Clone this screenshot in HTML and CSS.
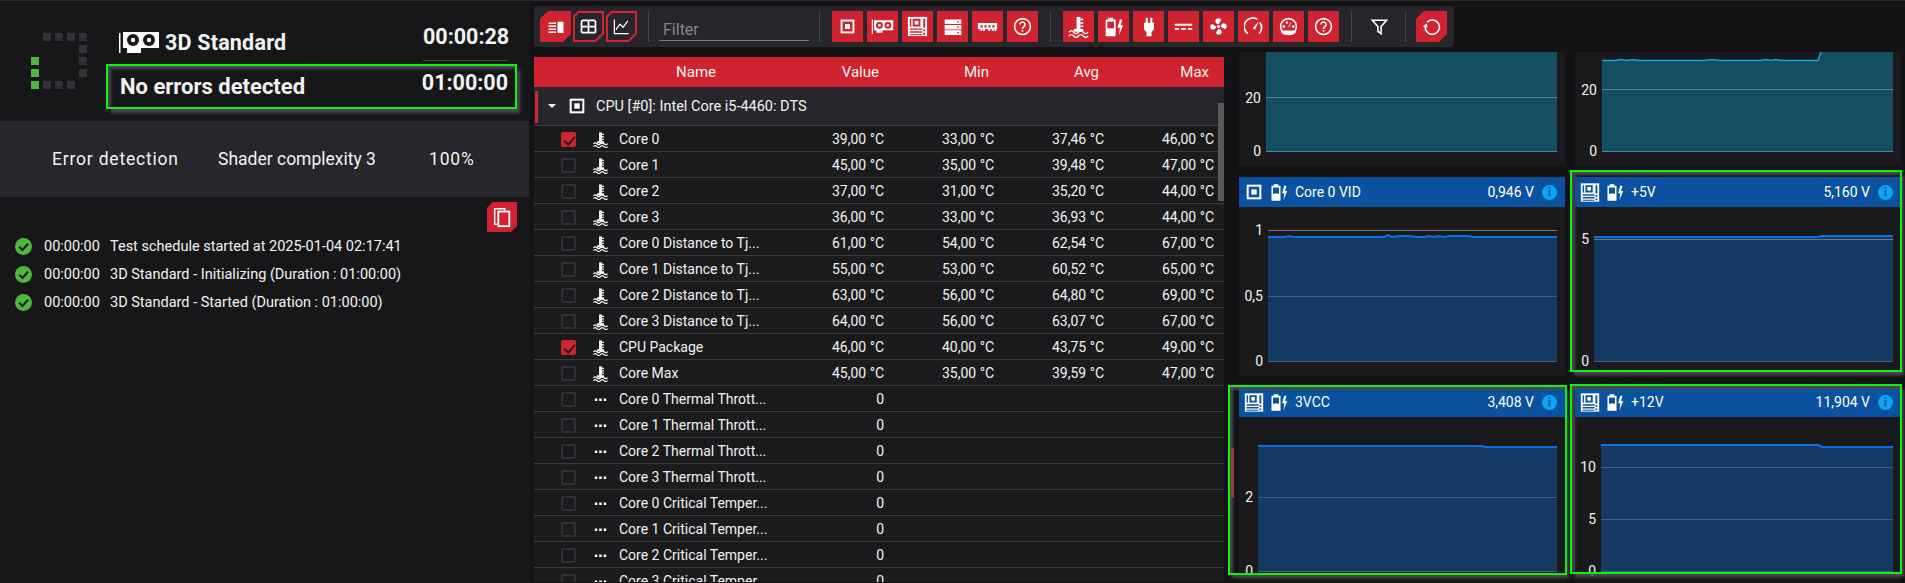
FILE: index.html
```html
<!DOCTYPE html>
<html lang="en">
<head>
<meta charset="utf-8">
<title>3D Standard</title>
<link rel="stylesheet" href="styles.css">
</head>
<body>
<svg class="sprite" xmlns="http://www.w3.org/2000/svg">
  <symbol id="i-panel" viewBox="0 0 24 24"><path d="M2 6h10v2H2zM2 10h10v2H2zM2 14h10v2H2zM2 18h10v2H2zM14 5h8v15h-8z" fill="#fff"/></symbol>
  <symbol id="i-table" viewBox="0 0 24 24"><rect x="4" y="5" width="16" height="14" rx="2" fill="none" stroke="#fff" stroke-width="2"/><path d="M4 12h16M12 5v14" stroke="#fff" stroke-width="2"/></symbol>
  <symbol id="i-chart" viewBox="0 0 24 24"><path d="M3 3v18h18" fill="none" stroke="#fff" stroke-width="1.6"/><path d="M5 16l5-7 4 4 6-8" fill="none" stroke="#fff" stroke-width="1.6"/></symbol>
  <symbol id="i-cpu" viewBox="0 0 24 24"><rect x="2.5" y="2.5" width="19" height="19" fill="none" stroke="#fff" stroke-width="3"/><rect x="8" y="8" width="8" height="8" fill="#fff"/></symbol>
  <symbol id="i-gpu" viewBox="0 0 30 24"><path d="M1 3h1.500v19H1zM4 4h25v13H15v3H7v-3H4z" fill="#fff"/><circle cx="11" cy="10.500" r="4.500" fill="#cf2430"/><circle cx="22" cy="10.500" r="4.500" fill="#cf2430"/><circle cx="11" cy="10.500" r="1.800" fill="#fff"/><circle cx="22" cy="10.500" r="1.800" fill="#fff"/></symbol>
  <symbol id="i-gpu-w" viewBox="0 0 40 22"><path d="M0 1h1.500v20H0zM4 0h36v16H22v5H8v-5H4z" fill="#fff"/><circle cx="14" cy="8" r="6" fill="#17171a"/><circle cx="30" cy="8" r="6" fill="#17171a"/><circle cx="14" cy="8" r="2.200" fill="#fff"/><circle cx="30" cy="8" r="2.200" fill="#fff"/></symbol>
  <symbol id="i-mobo" viewBox="0 0 24 24"><path d="M2 2h20v20H2z" fill="#fff"/><path d="M7 4h8v8H7zM4 14h13v1.500H4zM4 17h13v1.500H4zM4 20h13v1H4zM18 4h2v9h-2zM18 15h2v2h-2zM18 18.500h2v2h-2zM4 4h1.500v8H4z" fill="currentColor"/><path d="M9 6h4v4H9z" fill="#fff"/></symbol>
  <symbol id="i-store" viewBox="0 0 24 24"><path d="M2 3h20v5.500H2zM2 9.500h20V15H2zM2 16h20v5.500H2z" fill="#fff"/><path d="M17 5h2v1.500h-2zM17 11.500h2V13h-2zM17 18h2v1.500h-2z" fill="#cf2430"/></symbol>
  <symbol id="i-ram" viewBox="0 0 24 24"><path d="M1 8h22v7h-1v2h-2v-2h-1v2h-2v-2h-2v2h-2v-2H9v2H7v-2H6v2H4v-2H1z" fill="#fff"/><path d="M4 10.500h2.500V13H4zM8.500 10.500H11V13H8.500zM13 10.500h2.500V13H13zM17.500 10.500H20V13h-2.500z" fill="#cf2430"/></symbol>
  <symbol id="i-help" viewBox="0 0 24 24"><circle cx="12" cy="12" r="10" fill="none" stroke="#fff" stroke-width="2"/><path d="M8.800 9.500a3.200 3.200 0 1 1 5 2.700c-1.200.8-1.800 1.400-1.800 2.800" fill="none" stroke="#fff" stroke-width="2"/><path d="M11 16.500h2v2h-2z" fill="#fff"/></symbol>
  <symbol id="i-temp" viewBox="0 0 24 24"><path d="M10 2h4v13h-4z" fill="#fff"/><path d="M14 4h3v1.500h-3zM14 7.500h3V9h-3zM14 11h3v1.500h-3z" fill="#fff"/><path d="M7 16h10" stroke="#fff" stroke-width="3"/><path d="M2 18c2-2 3-2 5 0s3 2 5 0 3-2 5 0 3 2 5 0M2 22c2-2 3-2 5 0s3 2 5 0 3-2 5 0 3 2 5 0" fill="none" stroke="#fff" stroke-width="1.500"/></symbol>
  <symbol id="i-volt" viewBox="0 0 24 24"><path d="M5 1h6v2h3v20H2V3h3z" fill="#fff"/><path d="M4 5.500h8v8H4z" fill="currentColor"/><path d="M19 3l-3 10h3l-1 9 5-12h-3l2-7z" fill="#fff"/></symbol>
  <symbol id="i-plug" viewBox="0 0 24 24"><path d="M8 1h2.500v6h3V1H16v6h2v8l-3 3v5H9v-5l-3-3V7h2z" fill="#fff"/></symbol>
  <symbol id="i-dc" viewBox="0 0 24 24"><path d="M1 8.500h22v2.500H1zM1 14h5.500v2H1zM9 14h6v2H9zM17.500 14H23v2h-5.500z" fill="#fff"/></symbol>
  <symbol id="i-fan" viewBox="0 0 24 24"><circle cx="12" cy="12" r="2" fill="#fff"/><path d="M11 9C8 8 7 5 9 2.500c2-1.500 6-1 6 1.500 0 2-2 3-3 5zM15 11c1-3 4-4 6.500-2 1.500 2 1 6-1.500 6-2 0-3-2-5-3zM13 15c3 1 4 4 2 6.500-2 1.500-6 1-6-1.500 0-2 2-3 3-5zM9 13c-1 3-4 4-6.500 2C1 13 1.500 9 4 9c2 0 3 2 5 3z" fill="#fff"/></symbol>
  <symbol id="i-gauge" viewBox="0 0 24 24"><path d="M5 21A10.500 10.500 0 0 1 17 3M20 7a10.500 10.500 0 0 1-1 14" fill="none" stroke="#fff" stroke-width="2.200"/><path d="M19 5l-5 11-3-2z" fill="#fff"/></symbol>
  <symbol id="i-dial" viewBox="0 0 24 24"><circle cx="12" cy="12" r="10" fill="none" stroke="#fff" stroke-width="2"/><path d="M3 17h18v3l-3 2H6l-3-2z" fill="#fff"/><path d="M5 11h2v2H5zM9 6h2v2H9zM17 11h2v2h-2zM15 7l-3 6" stroke="#fff" fill="#fff"/></symbol>
  <symbol id="i-funnel" viewBox="0 0 24 24"><path d="M3 4h18l-7 8v9l-4-3v-6z" fill="none" stroke="#fff" stroke-width="2"/></symbol>
  <symbol id="i-reset" viewBox="0 0 24 24"><path d="M6.500 6.500A9 9 0 1 1 4 13" fill="none" stroke="#fff" stroke-width="2"/><path d="M1 12l5-4 1 6z" fill="#fff"/></symbol>
  <symbol id="i-copy" viewBox="0 0 24 24"><path d="M7 20H4V3h11v2" fill="none" stroke="#fff" stroke-width="1.600"/><rect x="8" y="6" width="12" height="16" fill="none" stroke="#fff" stroke-width="2"/></symbol>
  <symbol id="i-ok" viewBox="0 0 24 24"><circle cx="12" cy="12" r="12" fill="#4cb83c"/><path d="M6 12.500l4.500 4.500L18.500 8" fill="none" stroke="#17171a" stroke-width="3"/></symbol>
  <symbol id="i-dots" viewBox="0 0 24 24"><path d="M4 10.500h3.500V14H4zM10.200 10.500h3.500V14h-3.500zM16.500 10.500H20V14h-3.500z" fill="#fff"/></symbol>
</svg>

<div class="app">
  <aside class="side">
    <section class="status">
      <div class="spinner">
        <i></i><i class="off"></i><i class="off"></i><i class="off"></i><i class="off"></i>
        <i></i><i></i><i></i><i></i><i class="off"></i>
        <i class="on"></i><i></i><i></i><i></i><i class="off"></i>
        <i class="on"></i><i></i><i></i><i></i><i class="off"></i>
        <i class="on"></i><i class="off"></i><i class="off"></i><i class="off"></i><i></i>
      </div>
      <div class="head">
        <div class="title-row">
          <svg class="title-icon"><use href="#i-gpu-w"/></svg>
          <span class="title">3D Standard</span>
          <span class="timer timer-run">00:00:28</span>
        </div>
        <div class="result">
          <span class="result-text">No errors detected</span>
          <span class="timer">01:00:00</span>
        </div>
      </div>
    </section>
    <section class="band">
      <span class="band-wide">Error detection</span>
      <span>Shader complexity 3</span>
      <span class="band-wide">100%</span>
    </section>
    <div class="copy-row"><button class="copy"><svg class="ic-copy"><use href="#i-copy"/></svg></button></div>
    <ul class="log">
      <li><svg class="ok"><use href="#i-ok"/></svg><span>00:00:00</span><span>Test schedule started at 2025-01-04 02:17:41</span></li>
      <li><svg class="ok"><use href="#i-ok"/></svg><span>00:00:00</span><span>3D Standard - Initializing (Duration : 01:00:00)</span></li>
      <li><svg class="ok"><use href="#i-ok"/></svg><span>00:00:00</span><span>3D Standard - Started (Duration : 01:00:00)</span></li>
    </ul>
  </aside>

  <main class="main">
    <nav class="toolbar">
      <div class="tools tight">
        <button class="btn cut"><svg class="ic s18"><use href="#i-panel"/></svg></button>
        <button class="btn ghost"><svg class="ic s21"><use href="#i-table"/></svg></button>
        <button class="btn ghost"><svg class="ic s19"><use href="#i-chart"/></svg></button>
      </div>
      <span class="sep sep-a"></span>
      <label class="filter">Filter</label>
      <span class="sep sep-b"></span>
      <div class="tools">
        <button class="btn"><svg class="ic s15"><use href="#i-cpu"/></svg></button>
        <button class="btn"><svg class="ic s23"><use href="#i-gpu"/></svg></button>
        <button class="btn"><svg class="ic s23"><use href="#i-mobo"/></svg></button>
        <button class="btn"><svg class="ic s20"><use href="#i-store"/></svg></button>
        <button class="btn"><svg class="ic s21"><use href="#i-ram"/></svg></button>
        <button class="btn"><svg class="ic s19"><use href="#i-help"/></svg></button>
      </div>
      <span class="sep sep-c"></span>
      <div class="tools">
        <button class="btn"><svg class="ic s23"><use href="#i-temp"/></svg></button>
        <button class="btn"><svg class="ic s20"><use href="#i-volt"/></svg></button>
        <button class="btn"><svg class="ic s20"><use href="#i-plug"/></svg></button>
        <button class="btn"><svg class="ic s19"><use href="#i-dc"/></svg></button>
        <button class="btn"><svg class="ic s19"><use href="#i-fan"/></svg></button>
        <button class="btn"><svg class="ic s19"><use href="#i-gauge"/></svg></button>
        <button class="btn"><svg class="ic s19"><use href="#i-dial"/></svg></button>
        <button class="btn"><svg class="ic s19"><use href="#i-help"/></svg></button>
      </div>
      <span class="sep sep-d"></span>
      <svg class="ic funnel"><use href="#i-funnel"/></svg>
      <span class="sep sep-e"></span>
      <button class="btn cut"><svg class="ic s19"><use href="#i-reset"/></svg></button>
    </nav>

    <div class="content">
      <section class="table">
        <div class="thead">
          <span class="c-name">Name</span><span class="num">Value</span><span class="num">Min</span><span class="num">Avg</span><span class="num">Max</span>
        </div>
        <div class="group">
          <span class="caret"></span>
          <svg class="gicon"><use href="#i-cpu"/></svg>
          <span>CPU [#0]: Intel Core i5-4460: DTS</span>
        </div>
        <div class="rows">
          <div class="row"><i class="box on"></i><svg class="ric"><use href="#i-temp"/></svg><span>Core 0</span><span>39,00 °C</span><span>33,00 °C</span><span>37,46 °C</span><span>46,00 °C</span></div>
          <div class="row"><i class="box"></i><svg class="ric"><use href="#i-temp"/></svg><span>Core 1</span><span>45,00 °C</span><span>35,00 °C</span><span>39,48 °C</span><span>47,00 °C</span></div>
          <div class="row"><i class="box"></i><svg class="ric"><use href="#i-temp"/></svg><span>Core 2</span><span>37,00 °C</span><span>31,00 °C</span><span>35,20 °C</span><span>44,00 °C</span></div>
          <div class="row"><i class="box"></i><svg class="ric"><use href="#i-temp"/></svg><span>Core 3</span><span>36,00 °C</span><span>33,00 °C</span><span>36,93 °C</span><span>44,00 °C</span></div>
          <div class="row"><i class="box"></i><svg class="ric"><use href="#i-temp"/></svg><span>Core 0 Distance to Tj...</span><span>61,00 °C</span><span>54,00 °C</span><span>62,54 °C</span><span>67,00 °C</span></div>
          <div class="row"><i class="box"></i><svg class="ric"><use href="#i-temp"/></svg><span>Core 1 Distance to Tj...</span><span>55,00 °C</span><span>53,00 °C</span><span>60,52 °C</span><span>65,00 °C</span></div>
          <div class="row"><i class="box"></i><svg class="ric"><use href="#i-temp"/></svg><span>Core 2 Distance to Tj...</span><span>63,00 °C</span><span>56,00 °C</span><span>64,80 °C</span><span>69,00 °C</span></div>
          <div class="row"><i class="box"></i><svg class="ric"><use href="#i-temp"/></svg><span>Core 3 Distance to Tj...</span><span>64,00 °C</span><span>56,00 °C</span><span>63,07 °C</span><span>67,00 °C</span></div>
          <div class="row"><i class="box on"></i><svg class="ric"><use href="#i-temp"/></svg><span>CPU Package</span><span>46,00 °C</span><span>40,00 °C</span><span>43,75 °C</span><span>49,00 °C</span></div>
          <div class="row"><i class="box"></i><svg class="ric"><use href="#i-temp"/></svg><span>Core Max</span><span>45,00 °C</span><span>35,00 °C</span><span>39,59 °C</span><span>47,00 °C</span></div>
          <div class="row"><i class="box"></i><svg class="ric"><use href="#i-dots"/></svg><span>Core 0 Thermal Thrott...</span><span>0</span></div>
          <div class="row"><i class="box"></i><svg class="ric"><use href="#i-dots"/></svg><span>Core 1 Thermal Thrott...</span><span>0</span></div>
          <div class="row"><i class="box"></i><svg class="ric"><use href="#i-dots"/></svg><span>Core 2 Thermal Thrott...</span><span>0</span></div>
          <div class="row"><i class="box"></i><svg class="ric"><use href="#i-dots"/></svg><span>Core 3 Thermal Thrott...</span><span>0</span></div>
          <div class="row"><i class="box"></i><svg class="ric"><use href="#i-dots"/></svg><span>Core 0 Critical Temper...</span><span>0</span></div>
          <div class="row"><i class="box"></i><svg class="ric"><use href="#i-dots"/></svg><span>Core 1 Critical Temper...</span><span>0</span></div>
          <div class="row"><i class="box"></i><svg class="ric"><use href="#i-dots"/></svg><span>Core 2 Critical Temper...</span><span>0</span></div>
          <div class="row"><i class="box"></i><svg class="ric"><use href="#i-dots"/></svg><span>Core 3 Critical Temper...</span><span>0</span></div>
        </div>
        <div class="scrollbar"></div>
      </section>

      <section class="charts">
        <article class="card">
          <svg class="plot" viewBox="0 0 326 114">
            <rect class="teal" x="27" y="0" width="291" height="100"/>
            <path class="grid-t" d="M27 45.500H318M27 99.500H318"/>
            <text class="tick" x="22" y="51">20</text>
            <text class="tick" x="22" y="104">0</text>
          </svg>
        </article>
        <article class="card">
          <svg class="plot" viewBox="0 0 326 114">
            <path class="teal" d="M27 8.500H40L46 7.500 52 8.500 58 7.500 64 8.500H130L137 7.500 144 8.500H186L191 7.500 196 8.500 201 7.500 206 8.500H243L246 0H318V100H27Z"/>
            <path class="grid-t" d="M27 37.500H318M27 99.500H318"/>
            <path class="line-t" d="M27 8.500H40L46 7.500 52 8.500 58 7.500 64 8.500H130L137 7.500 144 8.500H186L191 7.500 196 8.500 201 7.500 206 8.500H243L246 0"/>
            <text class="tick" x="22" y="43">20</text>
            <text class="tick" x="22" y="104">0</text>
          </svg>
        </article>
        <article class="card">
          <header class="chead">
            <span class="slot"><svg class="h-cpu"><use href="#i-cpu"/></svg></span>
            <svg class="h-volt"><use href="#i-volt"/></svg>
            <span class="cname">Core 0 VID</span><span class="cval">0,946 V</span><span class="info">i</span>
          </header>
          <svg class="plot" viewBox="0 0 326 169">
            <path class="blue" d="M29 30H46L50 29 55 30H145L149 28 153 30 160 29H170L178 30H186L190 29 195 30 200 29 204 30 210 29H228L234 30H318V155H29Z"/>
            <path class="grid-top" d="M29 23.500H318"/>
            <path class="grid-b" d="M29 89.500H318M29 154.500H318"/>
            <path class="line-b" d="M29 30H46L50 29 55 30H145L149 28 153 30 160 29H170L178 30H186L190 29 195 30 200 29 204 30 210 29H228L234 30H318"/>
            <text class="tick" x="24" y="28">1</text>
            <text class="tick" x="24" y="94">0,5</text>
            <text class="tick" x="24" y="159">0</text>
          </svg>
        </article>
        <article class="card hl hl-5v">
          <header class="chead">
            <span class="slot"><svg class="h-mobo"><use href="#i-mobo"/></svg></span>
            <svg class="h-volt"><use href="#i-volt"/></svg>
            <span class="cname">+5V</span><span class="cval">5,160 V</span><span class="info">i</span>
          </header>
          <svg class="plot" viewBox="0 0 326 169">
            <path class="blue" d="M19 30H243L246 29H318V155H19Z"/>
            <path class="grid-top" d="M19 32.500H318"/>
            <path class="grid-b" d="M19 154.500H318"/>
            <path class="line-b" d="M19 30H243L246 29H318"/>
            <text class="tick" x="14" y="37">5</text>
            <text class="tick" x="14" y="159">0</text>
          </svg>
        </article>
        <article class="card hl hl-3v">
          <span class="mark"></span>
          <header class="chead">
            <span class="slot"><svg class="h-mobo"><use href="#i-mobo"/></svg></span>
            <svg class="h-volt"><use href="#i-volt"/></svg>
            <span class="cname">3VCC</span><span class="cval">3,408 V</span><span class="info">i</span>
          </header>
          <svg class="plot" viewBox="0 0 326 166">
            <path class="blue" d="M19 29H243L246 30H318V155H19Z"/>
            <path class="grid-b" d="M19 80.500H318M19 154.500H318"/>
            <path class="line-b" d="M19 29H243L246 30H318"/>
            <text class="tick" x="14" y="85">2</text>
            <text class="tick" x="14" y="159">0</text>
          </svg>
        </article>
        <article class="card hl hl-12v">
          <header class="chead">
            <span class="slot"><svg class="h-mobo"><use href="#i-mobo"/></svg></span>
            <svg class="h-volt"><use href="#i-volt"/></svg>
            <span class="cname">+12V</span><span class="cval">11,904 V</span><span class="info">i</span>
          </header>
          <svg class="plot" viewBox="0 0 326 166">
            <path class="blue" d="M26 28H243L247 30H318V155H26Z"/>
            <path class="grid-b" d="M26 50.500H318M26 102.500H318M26 154.500H318"/>
            <path class="line-b" d="M26 28H243L247 30H318"/>
            <text class="tick" x="21" y="55">10</text>
            <text class="tick" x="21" y="107">5</text>
            <text class="tick" x="21" y="159">0</text>
          </svg>
        </article>
      </section>
    </div>
  </main>
</div>
</body>
</html>
```
FILE: styles.css
```css
* { box-sizing: border-box; }
html, body { margin: 0; height: 583px; overflow: hidden; }
body {
  background: #131316;
  color: #f2f2f2;
  font-family: Roboto, "Liberation Sans", sans-serif;
  font-size: 14px;
}
.sprite { display: none; }

.app {
  display: grid;
  grid-template-columns: 530px 1fr;
  height: 583px;
  border-top: 1px solid #2c2c30;
}

/* left panel */
.side { background: #17171a; height: 582px; }
.status { display: flex; height: 120px; padding-left: 31px; }
.spinner {
  display: grid;
  grid-template-columns: repeat(5, 8px);
  grid-auto-rows: 8px;
  gap: 4px;
  width: 56px;
  height: 56px;
  margin-top: 32px;
}
.spinner .off { background: #323236; }
.spinner .on { background: #4fb83f; }
.head { width: 411px; margin-left: 19px; }
.title-row {
  display: flex;
  align-items: flex-start;
  height: 63px;
  padding: 27px 9px 0 13px;
}
.title-icon { width: 40px; height: 22px; margin-top: 4px; flex: none; }
.title { margin: 3px 0 0 6px; font-size: 21.500px; font-weight: 700; line-height: 24px; letter-spacing: .2px; }
.timer { font-size: 21.500px; font-weight: 700; line-height: 22px; margin-left: auto; }
.timer-run { width: 85px; height: 35px; margin-top: -2px; border-bottom: 1px solid #45454a; }
.result {
  position: relative;
  display: flex;
  align-items: flex-start;
  height: 45px;
  padding: 6px 7px 0 12px;
  border: 2px solid #0ef00e;
  box-shadow: inset 5px 5px 3px -2px #4a4a4e, 4px 5px 3px -1px #4a4a4e;
}
.result-text { margin-top: 4px; font-size: 22px; font-weight: 700; line-height: 22px; }
.band {
  display: grid;
  grid-template-columns: 166px 211px auto;
  align-items: center;
  width: 529px;
  height: 76px;
  padding-left: 52px;
  background: #26262c;
  font-size: 17.500px;
}
.band-wide { letter-spacing: .8px; }
.copy-row { display: flex; justify-content: flex-end; padding: 5px 13px 0 0; }
.copy, .btn { border: 0; padding: 0; display: flex; align-items: center; justify-content: center; background: #cf2430; }
.copy {
  width: 30px;
  height: 30px;
  clip-path: polygon(6px 0, 100% 0, 100% calc(100% - 6px), calc(100% - 6px) 100%, 0 100%, 0 6px);
}
.ic-copy { width: 22px; height: 22px; }
.log { list-style: none; margin: 0; padding: 0 0 0 15px; }
.log li {
  display: grid;
  grid-template-columns: 29px 66px 1fr;
  align-items: center;
  height: 28px;
  font-size: 14.500px;
}
.ok { width: 17px; height: 17px; }

/* toolbar */
.main { min-width: 0; }
.toolbar {
  display: flex;
  align-items: center;
  width: 920px;
  height: 41px;
  margin: 5px 0 0 4px;
  padding-left: 6px;
  background: #26262c;
  border-radius: 4px;
}
.tools { display: flex; gap: 4px; }
.tools.tight { gap: 2px; }
.btn { width: 31px; height: 31px; color: #cf2430; flex: none; }
.btn.cut { clip-path: polygon(8px 0, 100% 0, 100% calc(100% - 8px), calc(100% - 8px) 100%, 0 100%, 0 8px); }
.btn.ghost {
  position: relative;
  background: #cf2430;
  clip-path: polygon(5px 0, 100% 0, 100% calc(100% - 8px), calc(100% - 8px) 100%, 0 100%, 0 5px);
}
.btn.ghost::before {
  content: "";
  position: absolute;
  inset: 2px;
  background: #26262c;
  clip-path: polygon(4px 0, 100% 0, 100% calc(100% - 7px), calc(100% - 7px) 100%, 0 100%, 0 4px);
}
.btn .ic { position: relative; }
.s15 { width: 15px; height: 15px; }
.s18 { width: 18px; height: 18px; }
.s19 { width: 19px; height: 19px; }
.s20 { width: 20px; height: 20px; }
.s21 { width: 21px; height: 21px; }
.s23 { width: 23px; height: 23px; }
.sep { width: 1px; height: 31px; background: #45454a; flex: none; }
.sep-a { margin: 0 10px 0 11px; }
.sep-b { margin: 0 12px 0 10px; }
.sep-c { margin: 0 12px 0 12px; }
.sep-d { margin: 0 18px 0 12px; }
.sep-e { margin: 0 10px 0 16px; }
.filter {
  width: 150px;
  height: 28px;
  padding: 7px 0 0 4px;
  border-bottom: 1px solid #77777c;
  color: #86868c;
  font-size: 16px;
  line-height: 20px;
}
.funnel { flex: none; width: 19px; height: 19px; }

/* table */
.content { display: flex; height: 530px; margin-top: 5px; overflow: hidden; }
.table {
  position: relative;
  flex: none;
  width: 690px;
  height: 525px;
  margin: 5px 0 0 4px;
  overflow: hidden;
}
.thead, .row {
  display: grid;
  grid-template-columns: 58px 27px 154px 111px 110px 110px 110px;
  align-items: center;
}
.thead {
  height: 30px;
  background: #cf2430;
  font-size: 15px;
}
.c-name { grid-column: 3; text-align: center; }
.num { text-align: right; padding-right: 5px; }
.group {
  display: flex;
  align-items: center;
  height: 39px;
  padding-left: 14px;
  background: #26262c;
  border-bottom: 1px solid #3c3c40;
  font-size: 14.500px;
  position: relative;
}
.group::before {
  content: "";
  position: absolute;
  left: 1px;
  top: 4px;
  width: 3px;
  height: 32px;
  background: #cf2430;
  border-radius: 1px;
}
.caret { width: 0; height: 0; border: 4px solid transparent; border-top: 4px solid #fff; border-bottom: 0; margin-right: 13px; }
.gicon { width: 16px; height: 16px; margin-right: 11px; }
.row {
  height: 26px;
  padding-top: 1px;
  background: #1a1a1d;
  border-bottom: 1px solid #3a3a3d;
}
.row:nth-child(even) { background: #1c1c1f; }
.row > span:nth-child(n+4) { text-align: right; }
.box {
  width: 15px;
  height: 15px;
  margin-left: 27px;
  border: 2px solid #303034;
  border-radius: 2px;
}
.box.on {
  position: relative;
  border-color: #cf2430;
  background: #cf2430;
}
.box.on::after {
  content: "";
  position: absolute;
  left: 3px;
  top: 0;
  width: 5px;
  height: 9px;
  border: solid #1a1a1d;
  border-width: 0 2px 2px 0;
  transform: rotate(40deg);
}
.ric { width: 17px; height: 17px; }
.scrollbar {
  position: absolute;
  right: 0;
  top: 46px;
  width: 6px;
  height: 98px;
  background: #58585a;
}

/* charts */
.charts {
  display: grid;
  grid-template-columns: 326px 326px;
  grid-template-rows: 114px 199px 196px;
  column-gap: 10px;
  row-gap: 11px;
  padding-left: 15px;
}
.card { position: relative; background: #1a1a1d; }
.plot { display: block; width: 326px; }
.chead {
  display: flex;
  align-items: center;
  height: 30px;
  padding-right: 8px;
  background: #0a52a0;
  color: #0a52a0;
}
.slot { display: flex; justify-content: center; width: 22px; margin-left: 4px; }
.h-cpu { width: 16px; height: 16px; }
.h-mobo { width: 23px; height: 23px; }
.h-volt { width: 18px; height: 19px; margin: 0 7px 0 5px; flex: none; }
.cname { color: #fff; flex: 1; }
.cval { color: #fff; margin-right: 8px; }
.info {
  width: 15px;
  height: 15px;
  border-radius: 50%;
  background: #0aa6f2;
  color: #0a52a0;
  font: 700 12px/15px "Liberation Serif", serif;
  text-align: center;
}
.teal { fill: #154d61; }
.blue { fill: #143a64; }
.grid-t { stroke: #4e8596; fill: none; }
.grid-b { stroke: #3f5f8a; fill: none; }
.grid-top { stroke: #77777c; fill: none; }
.line-t { stroke: #10a8dc; stroke-width: 1.500; fill: none; }
.line-b { stroke: #0a6fe4; stroke-width: 2; fill: none; }
.tick { fill: #f2f2f2; font-size: 14px; text-anchor: end; }
.hl::after {
  content: "";
  position: absolute;
  border: 2px solid #0ef00e;
  box-shadow: inset 5px 5px 3px -2px #4a4a4e, 3px 4px 3px -1px #4a4a4e;
  pointer-events: none;
}
.hl-5v::after { top: -7px; left: -5px; right: -1px; bottom: 4px; }
.hl-3v::after { top: -2px; left: -11px; right: -2px; bottom: 8px; }
.hl-12v::after { top: -3px; left: -5px; right: -1px; bottom: 9px; }
.mark {
  position: absolute;
  z-index: 1;
  left: -8px;
  top: 61px;
  width: 3px;
  height: 50px;
  background: #8f4040;
}
```
